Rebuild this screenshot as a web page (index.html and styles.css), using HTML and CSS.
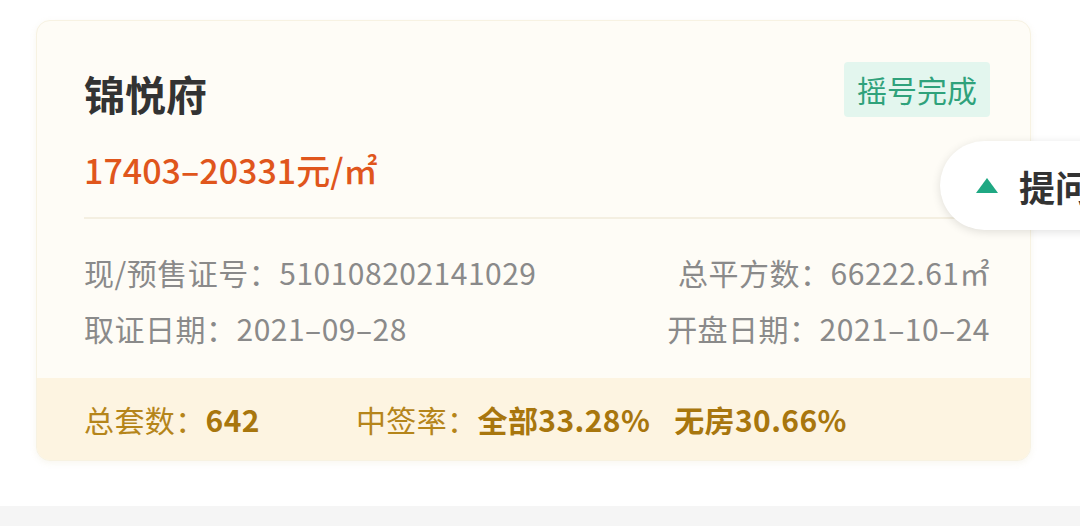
FILE: index.html
```html
<!DOCTYPE html>
<html lang="zh-CN">
<head>
    <meta charset="UTF-8">
    <meta name="viewport" content="width=device-width, initial-scale=1.0">
    <title>锦悦府</title>
    <link rel="stylesheet" href="styles.css">
</head>
<body>
    <div class="page">
        <div class="card">
            <div class="main">
                <div class="head">
                    <div class="title">锦悦府</div>
                    <div class="badge">摇号完成</div>
                </div>
                <div class="price">17403–20331元/㎡</div>
                <div class="divider"></div>
                <div class="rows">
                    <div class="row">
                        <span>现/预售证号：510108202141029</span>
                        <span>总平方数：66222.61㎡</span>
                    </div>
                    <div class="row">
                        <span>取证日期：2021–09–28</span>
                        <span>开盘日期：2021–10–24</span>
                    </div>
                </div>
            </div>
            <div class="band">
                <span class="stat">总套数：<b>642</b></span>
                <span class="stat">中签率：<b>全部33.28%</b><b class="gap">无房30.66%</b></span>
            </div>
        </div>
    </div>
    <div class="footer"></div>

    <div class="ask">
        <span class="arrow"></span>
        <span class="ask-text">提问</span>
    </div>
</body>
</html>
```

FILE: styles.css
```css
body {
    margin: 0;
    background: white;
    font-family: "Noto Sans CJK SC", "Noto Sans", sans-serif;
    overflow: hidden;
}
.page {
    padding: 20px 49px 45px 36px;
}
.card {
    width: 995px;
    background: #fefcf6;
    border: 1px solid #f7f2e2;
    border-radius: 14px;
    box-shadow: 0 2px 6px rgba(200, 180, 120, 0.12);
    overflow: hidden;
    box-sizing: border-box;
}
.main {
    padding: 41px 40px 22px 47px;
}
.head {
    display: flex;
    justify-content: space-between;
    align-items: center;
    height: 55px;
}
.title {
    font-size: 41px;
    font-weight: bold;
    color: #333;
    margin-top: 6px;
}
.badge {
    background: #e3f6ee;
    color: #2fa27b;
    font-size: 30px;
    height: 55px;
    line-height: 55px;
    padding: 0 13px;
    border-radius: 4px;
}
.price {
    margin-top: 30px;
    font-size: 34px;
    line-height: 46px;
    color: #e0561c;
    font-weight: 500;
}
.divider {
    height: 2px;
    background: #f4efe1;
    margin-top: 24px;
}
.rows {
    margin-top: 25px;
}
.row {
    display: flex;
    justify-content: space-between;
    font-size: 30px;
    line-height: 56px;
    letter-spacing: 0.5px;
    color: #8a8a8a;
}
.band {
    background: #fdf4e1;
    height: 82px;
    padding-left: 47px;
    display: flex;
    align-items: center;
    font-size: 30px;
    letter-spacing: 0.4px;
    color: #b5851a;
}
.stat b {
    color: #a8760d;
    font-weight: 600;
}
.stat + .stat {
    margin-left: 96px;
}
.gap {
    margin-left: 24px;
}
.footer {
    height: 30px;
    background: #f5f5f5;
}
.ask {
    position: absolute;
    left: 940px;
    top: 141px;
    width: 200px;
    height: 89px;
    border-radius: 45px;
    background: white;
    box-shadow: 0 2px 10px rgba(0, 0, 0, 0.12);
    display: flex;
    align-items: center;
    padding-left: 36px;
    box-sizing: border-box;
}
.arrow {
    width: 0;
    height: 0;
    border-left: 11px solid transparent;
    border-right: 11px solid transparent;
    border-bottom: 15px solid #1fa883;
}
.ask-text {
    margin-left: 21px;
    font-size: 36px;
    font-weight: bold;
    color: #333;
}
```
